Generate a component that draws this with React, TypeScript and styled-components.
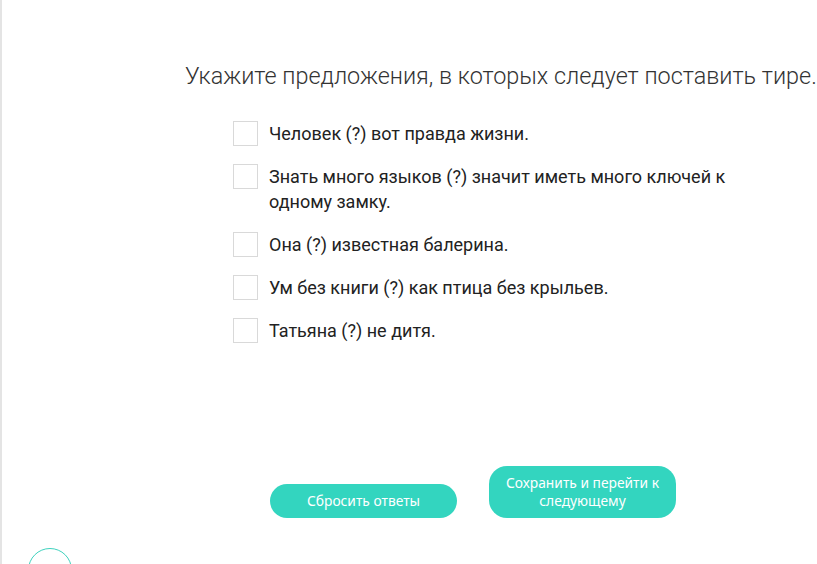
import React from "react";
import styled, { createGlobalStyle } from "styled-components";

const Global = createGlobalStyle`
  html, body { margin: 0; padding: 0; background: #fff; }
  body { font-family: Roboto, "Noto Sans", sans-serif; }
`;

const Page = styled.div`
  box-sizing: border-box;
  width: 817px;
  height: 564px;
  overflow: hidden;
  border-left: 2px solid #e4e4e4;
  display: flex;
  flex-direction: column;
  padding-top: 63px;
`;

const Title = styled.h1`
  margin: 0 0 0 183px;
  font-family: Roboto, sans-serif;
  font-weight: 300;
  font-size: 23.4px;
  line-height: 26px;
  color: #333;
  white-space: nowrap;
`;

const List = styled.div`
  margin: 32px 0 0 231px;
  display: flex;
  flex-direction: column;
  gap: 18px;
  width: 520px;
`;

const Row = styled.label`
  display: flex;
  align-items: flex-start;
  gap: 11px;
`;

const Box = styled.span`
  box-sizing: border-box;
  flex: none;
  width: 25px;
  height: 25px;
  border: 1px solid #d9d9d9;
  background: #fff;
`;

const Text = styled.span`
  font-family: Roboto, sans-serif;
  font-size: 18px;
  line-height: 25px;
  color: #222;
  max-width: 480px;
`;

const Buttons = styled.div`
  margin: 0 0 0 268px;
  margin-top: auto;
  display: flex;
  align-items: flex-end;
  gap: 32px;
`;

const Button = styled.button<{ $tall?: boolean }>`
  box-sizing: border-box;
  width: 187px;
  height: ${(p) => (p.$tall ? "52px" : "34px")};
  border: none;
  border-radius: ${(p) => (p.$tall ? "18px" : "17px")};
  background: #33d5bf;
  color: #fff;
  font-family: "Noto Sans", sans-serif;
  font-size: 13.8px;
  line-height: 18px;
  padding: 0 10px;
  text-align: center;
`;

const Circle = styled.div`
  box-sizing: border-box;
  margin: 30px 0 -28px 26px;
  flex: none;
  width: 44px;
  height: 44px;
  border-radius: 50%;
  border: 1.5px solid #3fd2be;
  display: flex;
  align-items: center;
  justify-content: center;
`;

const items = [
  "Человек (?) вот правда жизни.",
  "Знать много языков (?) значит иметь много ключей к одному замку.",
  "Она (?) известная балерина.",
  "Ум без книги (?) как птица без крыльев.",
  "Татьяна (?) не дитя.",
];

export default function App() {
  return (
    <>
      <Global />
      <Page>
        <Title>Укажите предложения, в которых следует поставить тире.</Title>
        <List>
          {items.map((t) => (
            <Row key={t}>
              <Box />
              <Text>{t}</Text>
            </Row>
          ))}
        </List>
        <Buttons>
          <Button>Сбросить ответы</Button>
          <Button $tall>Сохранить и перейти к следующему</Button>
        </Buttons>
        <Circle>
          <svg width="18" height="18" viewBox="0 0 18 18" fill="none">
            <path d="M4 9.5l3.5 3.5L14 5" stroke="#3fd2be" strokeWidth="1.5" strokeLinecap="round" strokeLinejoin="round" />
          </svg>
        </Circle>
      </Page>
    </>
  );
}
